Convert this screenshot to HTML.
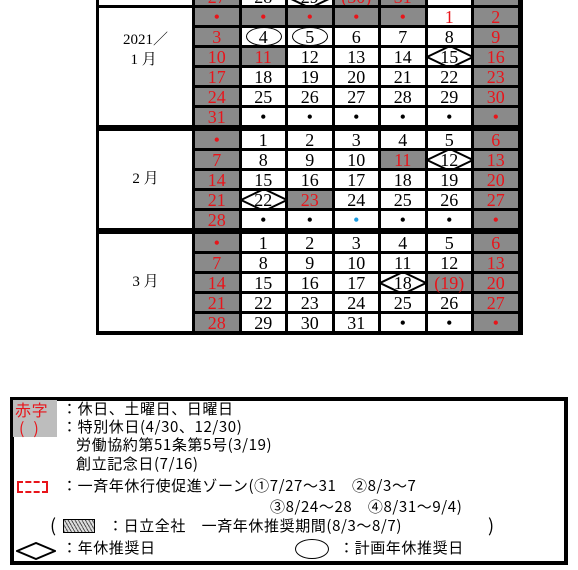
<!DOCTYPE html>
<html><head><meta charset="utf-8"><style>
body{margin:0;width:578px;height:570px;background:#fff;position:relative;overflow:hidden;font-family:"Liberation Serif","Noto Serif CJK SC",serif}
.m{position:absolute;left:96px;background:#000;display:grid;grid-template-columns:93px repeat(7,43.5px);column-gap:3px;row-gap:3px;padding:3px 5px 3px 3px;grid-auto-rows:17px}
.m>div{background:#fff;text-align:center;font-size:18px;line-height:18px;color:#000;position:relative;white-space:nowrap}
.m>div.l{grid-column:1;font-size:15px;display:flex;align-items:center;justify-content:center;line-height:19px;font-family:"Liberation Serif","Noto Serif CJK SC",serif}
.g{background:#8a8a8a!important}
.r{color:#e8141a!important}
.dm svg{position:absolute;left:-2px;top:-3px;overflow:visible}
.ov span{position:absolute;left:4px;top:-1px;width:34px;height:17px;border:1.3px solid #000;border-radius:50%}
.lg{position:absolute;left:10px;top:397px;width:550px;height:160px;border:4px solid #000;font-family:"Noto Sans CJK JP","Liberation Sans",sans-serif;font-size:15px;letter-spacing:0.6px}
.t{position:absolute;white-space:nowrap;line-height:18px}
</style></head><body>
<div class="m" style="top:-12px;padding-top:0;padding-bottom:0">
<div class="l"></div><div class="g r">27</div><div>28</div><div class="dm">29<svg width="48" height="24"><polygon points="1,12 24,1 47,12 24,23" fill="none" stroke="#000" stroke-width="2"/></svg></div><div class="g r">(30)</div><div class="g r">31</div><div></div><div class="g"></div>
</div>
<div class="m" style="top:5px">
<div class="l" style="grid-row:1/span 6;align-items:flex-start;padding-top:22px;line-height:20px;text-align:left">2021／<br>&nbsp;&nbsp;1 月</div>
<div class="g r">•</div><div class="g r">•</div><div class="g r">•</div><div class="g r">•</div><div class="g r">•</div><div class="r">1</div><div class="g r">2</div>
<div class="g r">3</div><div class="ov"><span></span>4</div><div class="ov"><span></span>5</div><div>6</div><div>7</div><div>8</div><div class="g r">9</div>
<div class="g r">10</div><div class="g r">11</div><div>12</div><div>13</div><div>14</div><div class="dm">15<svg width="48" height="24"><polygon points="1,12 24,1 47,12 24,23" fill="none" stroke="#000" stroke-width="2"/></svg></div><div class="g r">16</div>
<div class="g r">17</div><div>18</div><div>19</div><div>20</div><div>21</div><div>22</div><div class="g r">23</div>
<div class="g r">24</div><div>25</div><div>26</div><div>27</div><div>28</div><div>29</div><div class="g r">30</div>
<div class="g r">31</div><div>•</div><div>•</div><div>•</div><div>•</div><div>•</div><div class="g r">•</div>
</div>
<div class="m" style="top:128px">
<div class="l" style="grid-row:1/span 5">2 月</div>
<div class="g r">•</div><div>1</div><div>2</div><div>3</div><div>4</div><div>5</div><div class="g r">6</div>
<div class="g r">7</div><div>8</div><div>9</div><div>10</div><div class="g r">11</div><div class="dm">12<svg width="48" height="24"><polygon points="1,12 24,1 47,12 24,23" fill="none" stroke="#000" stroke-width="2"/></svg></div><div class="g r">13</div>
<div class="g r">14</div><div>15</div><div>16</div><div>17</div><div>18</div><div>19</div><div class="g r">20</div>
<div class="g r">21</div><div class="dm">22<svg width="48" height="24"><polygon points="1,12 24,1 47,12 24,23" fill="none" stroke="#000" stroke-width="2"/></svg></div><div class="g r">23</div><div>24</div><div>25</div><div>26</div><div class="g r">27</div>
<div class="g r">28</div><div>•</div><div>•</div><div style="color:#1a9be0">•</div><div>•</div><div>•</div><div class="g r">•</div>
</div>
<div class="m" style="top:231px;padding-bottom:4px">
<div class="l" style="grid-row:1/span 5">3 月</div>
<div class="g r">•</div><div>1</div><div>2</div><div>3</div><div>4</div><div>5</div><div class="g r">6</div>
<div class="g r">7</div><div>8</div><div>9</div><div>10</div><div>11</div><div>12</div><div class="g r">13</div>
<div class="g r">14</div><div>15</div><div>16</div><div>17</div><div class="dm">18<svg width="48" height="24"><polygon points="1,12 24,1 47,12 24,23" fill="none" stroke="#000" stroke-width="2"/></svg></div><div class="g r">(19)</div><div class="g r">20</div>
<div class="g r">21</div><div>22</div><div>23</div><div>24</div><div>25</div><div>26</div><div class="g r">27</div>
<div class="g r">28</div><div>29</div><div>30</div><div>31</div><div>•</div><div>•</div><div class="g r">•</div>
</div>

<div class="lg">
<div style="position:absolute;left:-1px;top:-1px;width:44px;height:37px;background:#bdbdbd"></div>
<div class="t" style="left:1px;top:-1px;color:#e8141a;font-size:16px">赤字</div>
<div class="t" style="left:5px;top:17px;color:#e8141a;font-size:16px">(&nbsp;&nbsp;)</div>
<div class="t" style="left:48px;top:-1px">：休日、土曜日、日曜日</div>
<div class="t" style="left:48px;top:17px">：特別休日(4/30、12/30)</div>
<div class="t" style="left:62px;top:35px">労働協約第51条第5号(3/19)</div>
<div class="t" style="left:62px;top:54px">創立記念日(7/16)</div>
<div style="position:absolute;left:3px;top:80px;width:27px;height:8px;border:2.5px dashed #e8141a"></div>
<div class="t" style="left:48px;top:76px">：一斉年休行使促進ゾーン(①7/27～31　②8/3～7</div>
<div class="t" style="left:256px;top:97px">③8/24～28　④8/31～9/4)</div>
<div class="t" style="left:36px;top:115px;font-size:18px">(</div>
<div style="position:absolute;left:49px;top:118px;width:30px;height:12px;border:1px solid #000;background:repeating-linear-gradient(60deg,#555 0 1px,#ddd 1px 3px)"></div>
<div class="t" style="left:94px;top:116px">：日立全社　一斉年休推奨期間(8/3～8/7)</div>
<div class="t" style="left:474px;top:115px;font-size:18px">)</div>
<svg style="position:absolute;left:2px;top:141px" width="40" height="18"><polygon points="1,9 20,1 39,9 20,17" fill="none" stroke="#000" stroke-width="2"/></svg>
<div class="t" style="left:48px;top:138px">：年休推奨日</div>
<div style="position:absolute;left:281px;top:138px;width:32px;height:18px;border:1.3px solid #000;border-radius:50%"></div>
<div class="t" style="left:325px;top:138px">：計画年休推奨日</div>
</div>
</body></html>
